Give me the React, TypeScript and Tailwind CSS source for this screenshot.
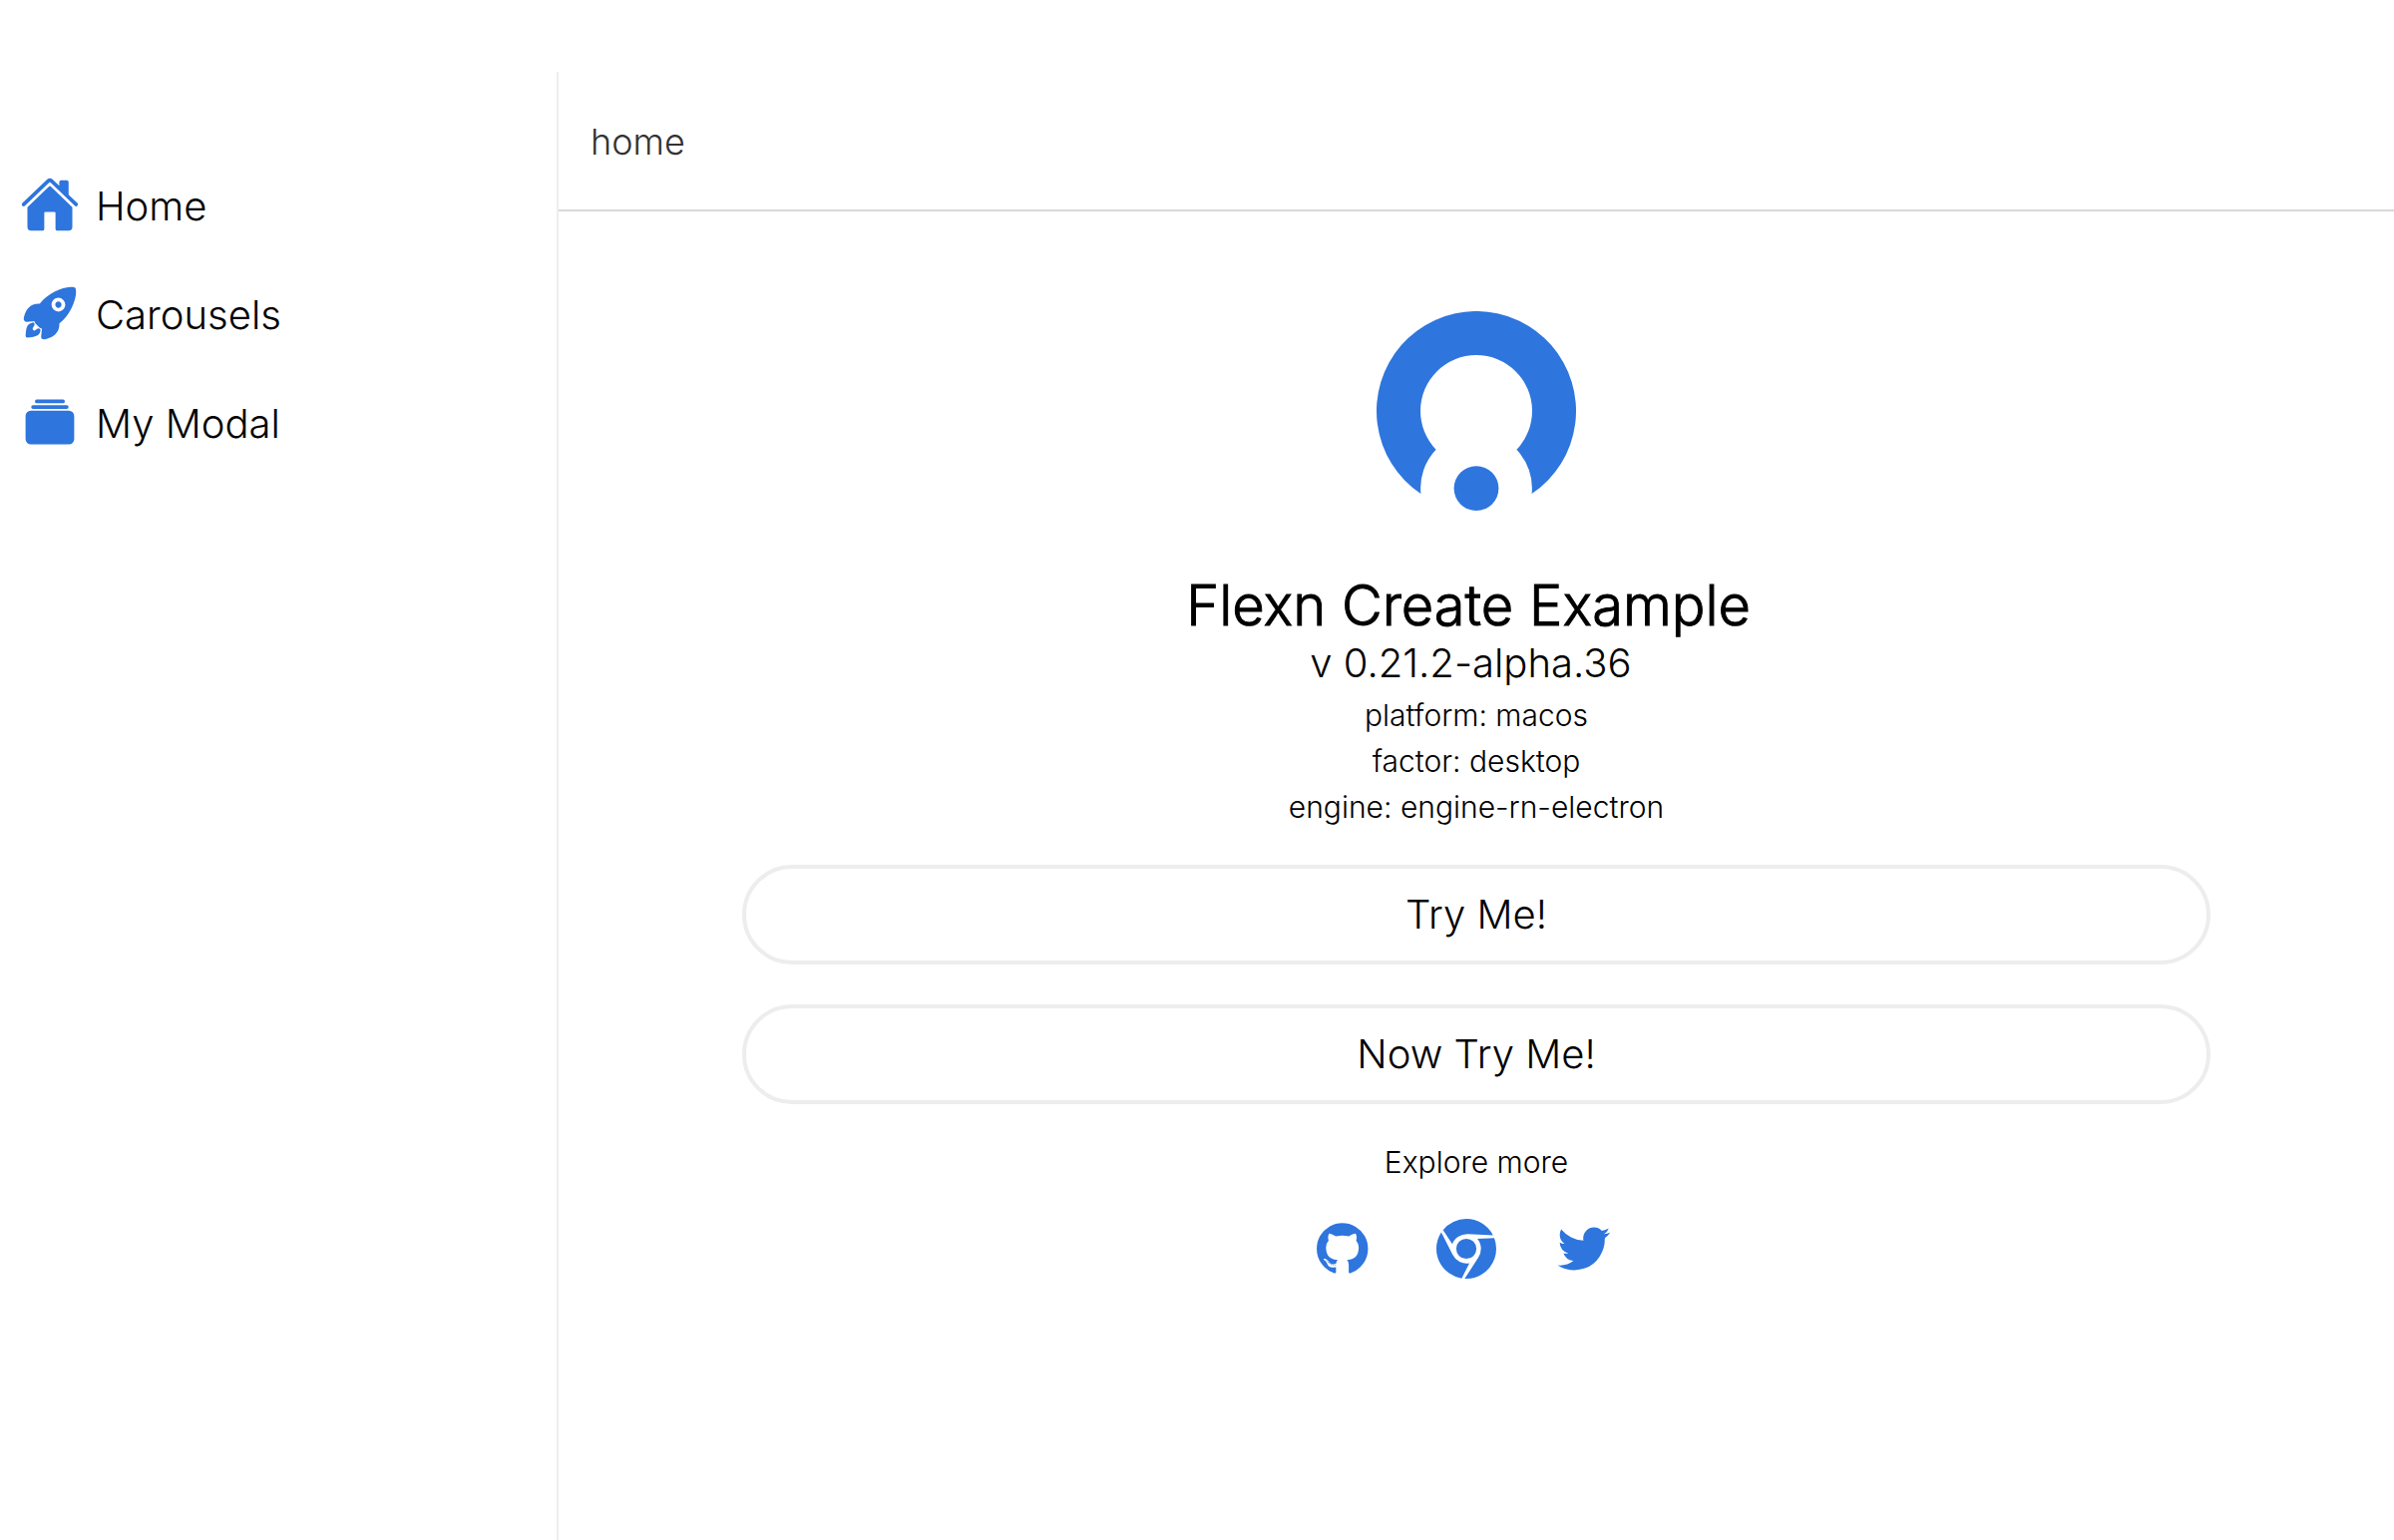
import type { ReactNode } from "react";
import { IoAlbums, IoHome, IoRocket } from "react-icons/io5";

const navItems = [
  { label: "Home", Icon: IoHome },
  { label: "Carousels", Icon: IoRocket },
  { label: "My Modal", Icon: IoAlbums },
];

const details = ["platform: macos", "factor: desktop", "engine: engine-rn-electron"];

function Logo() {
  return (
    <svg viewBox="0 0 200 200" className="size-50 fill-[#2e75de]" aria-hidden="true">
      <path d="M44.4 183.1A100 100 0 1 1 155.6 183.1A56 56 0 0 0 140.4 138.8A56 56 0 1 0 59.6 138.8A56 56 0 0 0 44.4 183.1Z" />
      <circle cx="100" cy="177.6" r="22.4" />
    </svg>
  );
}

function GithubIcon() {
  return (
    <svg viewBox="128 0 1792 1792" className="size-15" fill="currentColor" aria-hidden="true">
      <path d="M896 128q209 0 385.5 103t279.5 279.5 103 385.5q0 251-146.5 451.5t-378.5 277.5q-27 5-40-7t-13-30q0-3 .5-76.5t.5-134.5q0-97-52-142 57-6 102.5-18t94-39 81-66.5 53-105 20.5-150.5q0-119-79-206 37-91-8-204-28-9-81 11t-92 44l-38 24q-93-26-192-26t-192 26q-16-11-42.5-27t-83.5-38.5-85-13.5q-45 113-8 204-79 87-79 206 0 85 20.5 150t52.5 105 80.5 67 94 39 102.5 18q-39 36-49 103-21 10-45 15t-57 5-65.5-21.5-55.5-62.5q-19-32-48.5-52t-49.5-24l-20-3q-21 0-29 4.5t-5 11.5 9 14 13 12l7 5q22 10 43.5 38t31.5 51l10 23q13 38 44 61.5t67 30 69.5 7 55.5-3.5l23-4q0 38 .5 88.5t.5 54.5q0 18-13 30t-40 7q-232-77-378.5-277.5t-146.5-451.5q0-209 103-385.5t279.5-279.5 385.5-103zm-477 1103q3-7-7-12-10-3-13 2-3 7 7 12 9 6 13-2zm31 34q7-5-2-16-10-9-16-3-7 5 2 16 10 10 16 3zm30 45q9-7 0-19-8-13-17-6-9 5 0 18t17 7zm42 42q8-8-4-19-12-12-20-3-9 8 4 19 12 12 20 3zm57 25q3-11-13-16-15-4-19 7t13 15q15 6 19-6zm63 5q0-13-17-11-16 0-16 11 0 13 17 11 16 0 16-11zm58-10q-2-11-18-9-16 3-14 15t18 8 14-14z" />
    </svg>
  );
}

function ChromeIcon() {
  return (
    <svg viewBox="0 0 1792 1792" className="size-15" fill="currentColor" aria-hidden="true">
      <path d="M893 0q240-2 451 120 232 134 352 372l-742-39q-160-9-294 74.5t-185 229.5l-276-424q128-159 311-245.5t383-87.5zm-747 405l337 663q72 143 211 217t293 45l-230 451q-212-33-385-157.5t-272.5-316-99.5-411.5q0-267 146-491zm1586 169q58 150 59.5 310.5t-48.5 306-153 272-246 209.5q-230 133-498 119l405-623q88-131 82.5-290.5t-106.5-277.5zm-836 20q125 0 213.5 88.5t88.5 213.5-88.5 213.5-213.5 88.5-213.5-88.5-88.5-213.5 88.5-213.5 213.5-88.5z" />
    </svg>
  );
}

function TwitterIcon() {
  return (
    <svg viewBox="64 0 1792 1792" className="size-15" fill="currentColor" aria-hidden="true">
      <path d="M1684 408q-67 98-162 167 1 14 1 42 0 130-38 259.5t-115.5 248.5-184.5 210.5-258 146-323 54.5q-271 0-496-145 35 4 78 4 225 0 401-138-105-2-188-64.5t-114-159.5q33 5 61 5 43 0 85-11-112-23-185.5-111.5t-73.5-205.5v-4q68 38 146 41-66-44-105-115t-39-154q0-88 44-163 121 149 294.5 238.5t371.5 99.5q-8-38-8-74 0-134 94.5-228.5t228.5-94.5q140 0 236 102 109-21 205-78-37 115-142 178 93-10 186-50z" />
    </svg>
  );
}

function PillButton({ children }: { children: ReactNode }) {
  return (
    <button
      type="button"
      className="h-25 w-full rounded-full border-4 border-[#ededed] text-[40px] leading-12 font-light"
    >
      {children}
    </button>
  );
}

export default function App() {
  return (
    <div className="flex min-h-screen bg-white pt-18 font-['Inter',sans-serif] font-light text-black">
      <aside className="w-140 shrink-0 border-r-2 border-[#ededed] pt-20">
        <nav>
          {navItems.map(({ label, Icon }) => (
            <a key={label} href="#" className="flex h-[109px] items-center gap-4 pl-5 text-[40px] leading-12">
              <span className="pb-1 text-[#2e75de]">
                <Icon className="size-15" aria-hidden="true" />
              </span>
              {label}
            </a>
          ))}
        </nav>
      </aside>

      <div className="flex min-w-0 flex-1 flex-col">
        <header className="flex h-35 items-center border-b-2 border-[#d8d8d8] pt-0.5 pl-8 text-4xl text-[#333333]">
          home
        </header>

        <main className="flex flex-col items-center pt-25">
          <Logo />
          <h1 className="mt-[61px] text-[56px] leading-17 whitespace-pre [-webkit-text-stroke:1px_black]">
            {"Flexn Create Example "}
          </h1>
          <p className="text-[40px] leading-12 whitespace-pre">{"v 0.21.2-alpha.36 "}</p>
          {details.map((line) => (
            <p key={line} className="mt-2.5 text-3xl">
              {line}
            </p>
          ))}

          <div className="mt-10 flex w-4/5 flex-col gap-10">
            <PillButton>Try Me!</PillButton>
            <PillButton>Now Try Me!</PillButton>
          </div>

          <p className="mt-10 text-3xl">Explore more</p>
          <div className="mt-[39px] grid grid-cols-3 text-[#2e75de]">
            <a href="#" aria-label="GitHub" className="w-30 pl-5">
              <GithubIcon />
            </a>
            <a href="#" aria-label="Website" className="w-30 pl-5">
              <ChromeIcon />
            </a>
            <a href="#" aria-label="Twitter" className="w-30 pl-5">
              <TwitterIcon />
            </a>
          </div>
        </main>
      </div>
    </div>
  );
}
